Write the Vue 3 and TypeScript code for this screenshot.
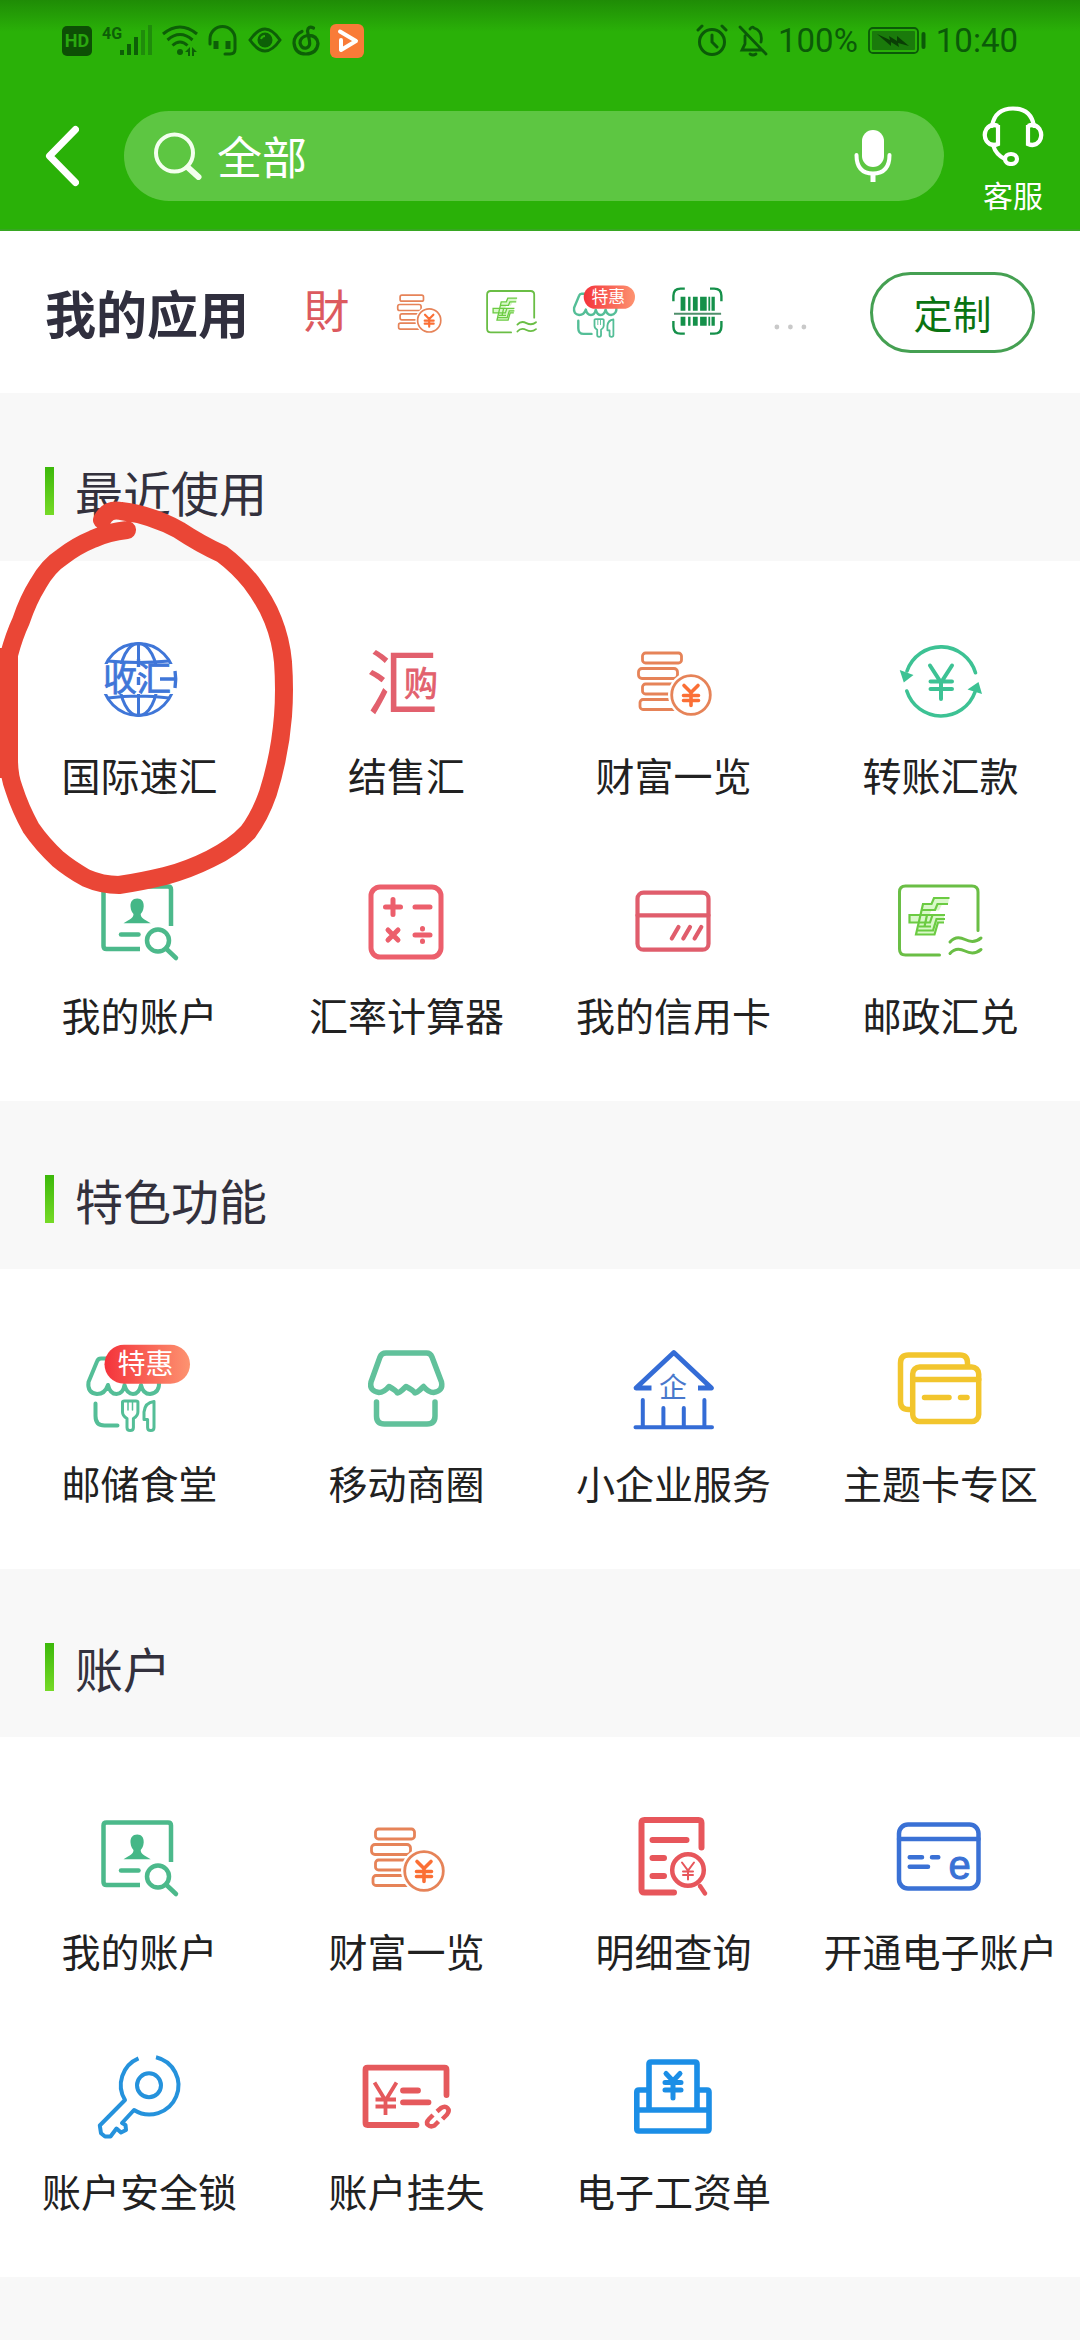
<script setup lang="ts">
import { ref } from 'vue'

interface Entry {
  label: string
  icon: string
}

interface Section {
  title: string
  marked?: boolean
  entries: Entry[]
}

const query = ref('全部')

// Every glyph is drawn on a 120 × 120 canvas.
const icons: Record<string, string> = {
  globe: `
    <g fill="none" stroke="#3f76d8" stroke-width="3">
      <circle cx="58.5" cy="58.5" r="36" />
      <ellipse cx="58.5" cy="58.5" rx="19" ry="36" />
      <path d="M58.5 22V95M28 40q30 3 61 0M28 77q30 -4 61 0" />
    </g>
    <path fill="#fff" d="M18 43H100V73H18Z" />
    <path fill="none" stroke="#3f76d8" stroke-width="3.4" d="M95 50q1.500 8 0 17M80 58h14M58.500 38v8M58.500 56v8" />
    <text x="57" y="70" font-size="34" text-anchor="middle" fill="#3f76d8" stroke="#3f76d8" stroke-width="0.8">收汇</text>`,
  exchange: `
    <text x="55" y="88" font-size="72" text-anchor="middle" fill="#e2606d">汇</text>
    <path fill="#fff" d="M56 45H94V80H56Z" />
    <text x="74" y="75" font-size="34" text-anchor="middle" fill="#e2606d" stroke="#e2606d" stroke-width="0.8">购</text>`,
  coins: `
    <g fill="none" stroke="#e68358" stroke-width="2.8">
      <rect x="28.5" y="32" width="39" height="10" rx="3" />
      <rect x="24.5" y="47.5" width="39" height="10" rx="3.5" />
      <rect x="28.5" y="63" width="39" height="10" rx="3" />
      <rect x="26" y="78.5" width="39" height="10" rx="3" />
    </g>
    <circle cx="77" cy="74" r="23" fill="#fff" />
    <circle cx="77" cy="74" r="19.3" fill="none" stroke="#e68358" stroke-width="2.8" />
    <path fill="none" stroke="#fb6f35" stroke-width="3.6" stroke-linecap="round" d="M70 64.5l7 7l7-7M77 72v12.500M69.500 74.500h15M69.500 79.500h15" />`,
  transfer: `
    <g fill="none" stroke="#3dc294" stroke-width="3.6" stroke-linecap="round">
      <path d="M26 50A36 36 0 0 1 94.500 51.700M25.800 70A36 36 0 0 0 94 71" />
      <path stroke-width="4" d="M49 44.500l11 17l11-17M60 61v17M49.500 60.500h21.500M49.500 68h21.500" />
    </g>
    <path fill="#3dc294" d="M18.700 49L32.500 54L22.800 61.500ZM97.500 61L86.500 68.500L101 73Z" />`,
  account: `
    <g fill="none" stroke="#4cb98b" stroke-width="4.500">
      <path d="M60 88H26.500q-3 0-3-3V28.500q0-3 3-3H88q3 0 3 3V65" />
      <path d="M41 73.500H58.500" stroke-linecap="round" />
      <circle cx="78" cy="79.500" r="11" />
      <path d="M86 87.500L96 97" stroke-linecap="round" />
    </g>
    <path fill="#45b787" d="M57.200 37.500c4.500 0 6.800 3 6.500 8c-.3 4-1.700 6-3 7.500c0 4 3 5 10 9.300H43.500c7-4.300 10-5.300 10-9.300c-1.300-1.500-2.700-3.500-3-7.500c-.3-5 2.200-8 6.700-8Z" />`,
  calculator: `
    <g fill="none" stroke="#ec5f6c" stroke-width="5" stroke-linecap="round">
      <rect x="24" y="26" width="70" height="70" rx="9" />
      <path d="M38.500 46h15M46 38.500v15M68 46h15M41 69l10 10M51 69l-10 10M68 74h15M75.500 67.500v0.500M75.500 80v0.500" />
    </g>`,
  credit: `
    <g fill="none" stroke="#e05d6c" stroke-width="4.2" stroke-linecap="round">
      <rect x="23.500" y="31.700" width="71" height="57" rx="6" />
      <path d="M23.500 54.300H94.500M57.800 77.500l6.700-11.500M69.300 77.500l6.700-11.500M80.600 77.500l6.700-11.500" />
    </g>`,
  postal: `
    <g fill="none" stroke="#6abe45" stroke-width="3" stroke-linecap="round">
      <path d="M58.500 94H24.500q-6 0-6-6V31q0-6 6-6H91q6 0 6 6V69.500" />
      <path d="M69 81q6-7 15-2.500t16-1.500M69 92.500q6-7 15-2.500t16-1.500" />
    </g>
    <path fill="#d9f8c9" d="M68 37H53L50.500 43H42L39.500 54H28.500V61.500H37.500L35 73.500H53.500L57 61.500H63V54.500H48L50.500 49.500H58L61 43.500H67Z" />
    <g fill="none" stroke="#6bcb42" stroke-width="2.200">
      <path d="M68.500 37H53L50.500 43H42L35 73.500H53.500L57 61.500H63" />
      <path d="M67 43H56.500L54 49H41M64 54H28.500V61.500H49L51.500 54M46 54L43.500 65.500M64 58H55.500L52 69.500H36.500M38 65.500H50" />
    </g>`,
  canteen: `
    <g fill="none" stroke="#54be97" stroke-width="4" stroke-linecap="round" stroke-linejoin="round">
      <path d="M28 29.500H21q-3 0-4 3L8.500 53Q7 64 17 65Q25 65 28 56Q30 65 36.500 65Q43 65 44.500 56Q47 65 53 65Q59 65 61 56Q63 65 70 65Q80 64 79 52" />
      <path d="M15.500 74.500V87q0 9.500 9 9.500H37.500" />
      <g stroke-width="3">
        <path d="M42.500 73V83q0 4 4.500 6.500V98.500q0 3 3.200 3t3.200-3V89.500q4.500-2.500 4.500-6.500V73q0-1-2-1H44.500q-2 0-2 1Z" />
        <path d="M74 72.500V98.500q0 3-3.200 3t-3.200-3V90.500H64V83q1-9.500 10-10.500Z" />
      </g>
      <path stroke-width="1.500" d="M48 73v8M52.500 73v8" />
    </g>
    <rect x="24.500" y="15.700" width="85.500" height="39" rx="19.500" fill="url(#badge-fill)" />
    <text x="65.500" y="45" font-size="28" text-anchor="middle" fill="#fff">特惠</text>`,
  scan: `
    <path fill="none" stroke="#15904a" stroke-width="4" d="M19 42V33q0-12 12-12H38M80 21H87q12 0 12 12V42M99 75V84q0 12-12 12H80M38 96H31q-12 0-12-12V75" />
    <g fill="#15904a">
      <path d="M31 34.500h8V58h-8ZM43.500 34.500h4V58h-4ZM51.500 34.500h8V58h-8ZM63.500 34.500h11V58h-11ZM77.300 34.500h3V58h-3ZM82.500 34.500h5.500V58h-5.500Z" />
      <path d="M31 68h8V83h-8ZM43.500 68h4V83h-4ZM51.500 68h8V83h-8ZM63.500 68h11V83h-11ZM77.300 68h3V83h-3ZM82.500 68h5.500V83h-5.500Z" />
    </g>
    <path stroke="#4f8f6b" stroke-width="3.500" d="M20 63H98.500" />`,
  wealth: `
    <text x="61" y="86" font-size="76" text-anchor="middle" fill="#dc5a5f" font-family="Noto Sans CJK TC, sans-serif">財</text>`,
  more: `
    <g fill="#c9c9c9">
      <circle cx="36.500" cy="85" r="4" />
      <circle cx="59" cy="85" r="4" />
      <circle cx="81.500" cy="85" r="4" />
    </g>`,
  store: `
    <g fill="none" stroke="#61c19b" stroke-width="5.500" stroke-linecap="round" stroke-linejoin="round">
      <path d="M39 24H79.500q4 0 5.500 4L94.500 53q2 9-8 10.500q-5 0-10-6q-8 8-9 6t-8.500-6q-8 8-9 6t-8-6q-5 6-10 6q-10-1.500-8-10.500L33 28q1.500-4 6-4Z" />
      <path d="M29.500 73V87q0 8 8 8H80q8 0 8-8V73" />
    </g>`,
  business: `
    <g fill="none" stroke="#346cd6" stroke-linecap="round" stroke-linejoin="round">
      <path stroke-width="4.800" stroke-linecap="butt" d="M37.500 59H22L59.800 23.500L97.500 59H84" />
      <path stroke-width="4" d="M28.800 71V97M49.400 79V97M69.800 79V97M90.400 71V97M21.500 98.200H98" />
    </g>
    <text x="59" y="69" font-size="28" text-anchor="middle" fill="#4878cc">企</text>`,
  cards: `
    <g fill="none" stroke="#f2c52d" stroke-width="5.500" stroke-linecap="round">
      <path d="M29 80.500H27.500q-8 0-8-8V34q0-8 8-8H79q7.500 0 7.500 8V36" />
      <rect x="31.700" y="38" width="66" height="54.500" rx="7" />
      <path d="M31.700 50.500H97.700M43.500 68.500H68M79.500 68.500H86" />
    </g>`,
  detail: `
    <g fill="none" stroke="#e7565b" stroke-width="6" stroke-linecap="round">
      <path d="M60 95.500H30.500q-3 0-3-3V26q0-3 3-3H84.500q3 0 3 3V50.500M38.500 43H72.500M38.500 61H50M38.500 79H50" />
      <circle cx="74" cy="73" r="15.800" stroke-width="4.500" />
      <path stroke-width="4.500" d="M86 89L91 96.500" />
      <path stroke-width="2" d="M68 65.500l6 8l6-8M74 73v9.500M69 74.500h10M69 78h10" />
    </g>`,
  ecard: `
    <g fill="none" stroke="#3a71d5" stroke-width="4.500" stroke-linecap="round">
      <rect x="18" y="27.500" width="79.500" height="64" rx="9" />
      <path d="M18 42H97.500M28.700 60.300H41M51 60.300H57.300M28.700 69.700H47" />
    </g>
    <text x="78.500" y="81.500" font-size="40" text-anchor="middle" fill="#3a71d5" stroke="#3a71d5" stroke-width="1" font-family="Liberation Sans, sans-serif">e</text>`,
  key: `
    <g fill="none" stroke="#2592dc" stroke-width="4" stroke-linejoin="round">
      <circle cx="69" cy="48.300" r="12" />
      <path d="M58.500 21.300A29 29 0 0 0 45 63L19.800 88.500L21 96.300L25 99.500H30.500L36.500 91.500L41 95.500L46 93L45.500 88L42 86L54 73A29 29 0 1 0 76 20.200" />
    </g>`,
  loss: `
    <g fill="none" stroke="#e5595c" stroke-width="5.800" stroke-linecap="round" stroke-linejoin="round">
      <path d="M69.500 88H20.500q-2 0-2-2V32.700q0-2 2-2H97.500q2 0 2 2V58M56 53.500H71M56 65.300H81.500" />
      <path stroke-width="3.800" stroke-linecap="butt" d="M27.500 45.500l11 18l11-18M38.500 62V78M28.500 62.500h20.500M28.500 69.500h20.500" />
      <path stroke-width="4.500" stroke-linecap="butt" d="M90 74.500l4-3.500q4-2.500 6.500 0t-.5 6.500L95.500 82M86 78l-4 4q-3.500 3.500-1 6t6.500.5l4-4" />
    </g>`,
  payroll: `
    <g fill="none" stroke="#1b8ee6" stroke-width="5.600" stroke-linejoin="round">
      <path d="M35 73V27q0-2 2-2H81q2 0 2 2V73M35 53H25q-2.200 0-2.200 2V92q0 2 2 2H93q2 0 2-2V55q0-2-2-2H83M22.800 73H95" />
      <path stroke-linecap="round" stroke-width="5" d="M52 36.500l7 7.500l7-7.500M59 45V61M51 45.500h16M51 53h16" />
    </g>`,
}

const pinned: string[] = ['wealth', 'coins', 'postal', 'canteen', 'scan', 'more']

const sections: Section[] = [
  {
    title: '最近使用',
    marked: true,
    entries: [
      { label: '国际速汇', icon: 'globe' },
      { label: '结售汇', icon: 'exchange' },
      { label: '财富一览', icon: 'coins' },
      { label: '转账汇款', icon: 'transfer' },
      { label: '我的账户', icon: 'account' },
      { label: '汇率计算器', icon: 'calculator' },
      { label: '我的信用卡', icon: 'credit' },
      { label: '邮政汇兑', icon: 'postal' },
    ],
  },
  {
    title: '特色功能',
    entries: [
      { label: '邮储食堂', icon: 'canteen' },
      { label: '移动商圈', icon: 'store' },
      { label: '小企业服务', icon: 'business' },
      { label: '主题卡专区', icon: 'cards' },
    ],
  },
  {
    title: '账户',
    entries: [
      { label: '我的账户', icon: 'account' },
      { label: '财富一览', icon: 'coins' },
      { label: '明细查询', icon: 'detail' },
      { label: '开通电子账户', icon: 'ecard' },
      { label: '账户安全锁', icon: 'key' },
      { label: '账户挂失', icon: 'loss' },
      { label: '电子工资单', icon: 'payroll' },
    ],
  },
]
</script>

<template>
  <div class="page">
    <svg class="defs" aria-hidden="true">
      <defs>
        <linearGradient id="badge-fill" x1="0" y1="0" x2="1" y2="0">
          <stop offset="0" stop-color="#f4333b" />
          <stop offset="1" stop-color="#fd9370" />
        </linearGradient>
      </defs>
    </svg>

    <header class="top">
      <div class="status">
        <div class="status-left">
          <svg width="30" height="34" viewBox="0 0 30 34" aria-hidden="true">
            <rect x="0" y="2" width="30" height="30" rx="5" fill="#0d4f05" />
            <text x="15" y="23" font-size="18" text-anchor="middle" fill="#2aa80f" class="latin">HD</text>
          </svg>
          <svg width="50" height="34" viewBox="0 0 50 34" aria-hidden="true">
            <text x="10" y="15" font-size="16" text-anchor="middle" fill="#0d5f07" class="latin">4G</text>
            <path fill="#0d5f07" d="M18 26h4v5h-4ZM25 20h4v11h-4ZM32 13h4v18h-4Z" />
            <path fill="#1f8c0b" d="M39 6h4v25h-4ZM46 1h4v30h-4Z" />
          </svg>
          <svg width="36" height="34" viewBox="0 0 36 34" aria-hidden="true">
            <g fill="none" stroke="#0d5f07" stroke-width="3">
              <path d="M1 10Q18-4 35 10M5.500 16Q18 5 30.500 16M10.500 21.500Q18 14.500 25.500 21.500" />
            </g>
            <circle cx="18" cy="28" r="3" fill="#0d5f07" />
            <path fill="#0d5f07" d="M28 23v9h-2v-4h-3ZM30 32v-9l5 5h-3v4Z" />
          </svg>
          <svg width="30" height="34" viewBox="0 0 30 34" aria-hidden="true">
            <g fill="none" stroke="#0d5f07" stroke-width="3" stroke-linecap="round">
              <path d="M2 20V15A12.500 12.500 0 0 1 27 15V25Q27 30 22 30H17" />
              <path stroke-width="5" stroke-linecap="butt" d="M8 17V25M20 17V25" />
            </g>
          </svg>
          <svg width="34" height="34" viewBox="0 0 34 34" aria-hidden="true">
            <path fill="none" stroke="#0d5f07" stroke-width="3" d="M2 16Q17-6 32 16Q17 38 2 16Z" />
            <circle cx="17" cy="16" r="7.500" fill="#0d5f07" />
            <path fill="none" stroke="#2ab108" stroke-width="2" d="M13 15q1-3 4-3" />
          </svg>
          <svg width="28" height="34" viewBox="0 0 28 34" aria-hidden="true">
            <path fill="none" stroke="#0d5f07" stroke-width="3.2" stroke-linecap="round" d="M10 7.500Q2 11 2 19Q3 30 14 30Q25 29.500 26 19.500Q25 11 15.500 11.500Q8 13 8 19Q9.500 25 14.500 24Q18.500 22.500 17.500 17L15.500 7Q16 1.500 21.500 4" />
          </svg>
          <svg width="34" height="34" viewBox="0 0 34 34" aria-hidden="true">
            <rect width="34" height="34" rx="6" fill="#f97b38" />
            <path fill="none" stroke="#fff" stroke-width="4" stroke-linecap="round" stroke-linejoin="round" d="M10 7.500L26 17L11 26V16" />
          </svg>
        </div>
        <div class="status-right">
          <svg width="32" height="34" viewBox="0 0 32 34" aria-hidden="true">
            <g fill="none" stroke="#0b5a08" stroke-width="3" stroke-linecap="round">
              <circle cx="16" cy="18" r="12.500" />
              <path d="M16 11v7l5 5M2 6l4-4M30 6l-4-4" />
            </g>
          </svg>
          <svg width="30" height="34" viewBox="0 0 30 34" aria-hidden="true">
            <g fill="none" stroke="#0b5a08" stroke-width="2.800" stroke-linecap="round">
              <path d="M2 3L28 30M7 12V20L4 26H23M12 5Q14 2 16 4Q25 7 23 18M12 30Q15 32 18 30" />
            </g>
          </svg>
          <span>100%</span>
          <svg width="58" height="34" viewBox="0 0 58 34" aria-hidden="true">
            <rect x="1" y="4" width="49" height="25" rx="4" fill="none" stroke="#0b5a08" stroke-width="1.800" />
            <rect x="4" y="7" width="43" height="19" rx="1" fill="#1a7a0b" />
            <path fill="#0a3f05" d="M9 10l13 6l-1-4l8 5v-5l12 10l-11-3l1 4l-8-5v4Z" />
            <path stroke="#0b5a08" stroke-width="4" stroke-linecap="round" d="M55.500 10V23" />
          </svg>
          <span>10:40</span>
        </div>
      </div>

      <div class="nav">
        <button type="button" class="back" aria-label="返回">
          <svg width="34" height="62" viewBox="0 0 34 62" aria-hidden="true">
            <path fill="none" stroke="#fff" stroke-width="7" stroke-linecap="round" stroke-linejoin="round" d="M30.500 4.500L4.500 31L30.500 57.500" />
          </svg>
        </button>
        <label class="search">
          <svg width="48" height="48" viewBox="0 0 48 48" aria-hidden="true">
            <circle cx="20.500" cy="21" r="18.500" fill="none" stroke="#f3ffee" stroke-width="4" />
            <path stroke="#f3ffee" stroke-width="6" stroke-linecap="round" d="M34 35.500L44.500 45" />
          </svg>
          <input v-model="query" type="text" aria-label="搜索" />
          <svg width="38" height="52" viewBox="0 0 38 52" aria-hidden="true">
            <rect x="8" y="0" width="22" height="37" rx="11" fill="#fff" />
            <path fill="none" stroke="#fff" stroke-width="4" stroke-linecap="round" d="M2.500 25Q2.500 43.500 19 43.500T35.500 25" />
            <path stroke="#fff" stroke-width="5" d="M19 43V52" />
          </svg>
        </label>
        <a href="#service" class="service">
          <svg width="62" height="60" viewBox="0 0 62 60" aria-hidden="true">
            <g fill="none" stroke="#fff" stroke-width="4.200" stroke-linecap="round">
              <path d="M10 20Q13 2.500 31 2.500T52 20" />
              <path d="M16 19V38Q9 41 4.500 35Q1 29 4.500 23Q9 17 16 20ZM46 19V38Q53 41 57.500 35Q61 29 57.500 23Q53 17 46 20Z" />
              <path d="M11 39Q14 49 23 53" />
              <ellipse cx="29" cy="53" rx="6" ry="5" />
            </g>
          </svg>
          <span>客服</span>
        </a>
      </div>
    </header>

    <main>
      <div class="mine">
        <h1>我的应用</h1>
        <div class="pinned">
          <svg
            v-for="name in pinned"
            :key="name"
            class="mini"
            viewBox="0 0 120 120"
            aria-hidden="true"
            v-html="icons[name]"
          />
        </div>
        <button type="button" class="customize">定制</button>
      </div>

      <section v-for="section in sections" :key="section.title">
        <h2>{{ section.title }}</h2>
        <ul>
          <li v-for="entry in section.entries" :key="entry.label">
            <a href="#app">
              <svg class="icon" viewBox="0 0 120 120" aria-hidden="true" v-html="icons[entry.icon]" />
              <span>{{ entry.label }}</span>
            </a>
          </li>
        </ul>
        <svg v-if="section.marked" class="mark" width="320" height="520" viewBox="0 393 320 520" aria-hidden="true">
          <path
            fill="none"
            stroke="#ea4636"
            stroke-width="18"
            stroke-linecap="round"
            stroke-linejoin="round"
            d="M102 520Q108 508 121 511Q152 515 179 530Q200 544 222 554Q238 566 251 582Q266 602 273 620Q281 640 283 662Q285 690 283 716Q280 755 268 793Q260 816 248 832Q233 848 210 859Q188 870 165 876Q140 882 119 885Q102 885 86 878Q70 869 58 859Q42 844 31 828Q20 808 14 789Q9 776 9 760V655Q14 636 21 621Q28 600 38 584Q48 566 62 557Q76 546 93 539Q108 532 127 530"
          />
          <path fill="none" stroke="#ea4636" stroke-width="10" d="M5 648V778" />
        </svg>
      </section>
    </main>
  </div>
</template>

<style>
body {
  margin: 0;
  background: #f8f8f8;
}
</style>

<style scoped>
.page {
  min-height: 100vh;
  background: #f8f8f8;
  font-family: 'Noto Sans CJK SC', 'Noto Sans', sans-serif;
  color: #212121;
}

.defs {
  position: absolute;
  width: 0;
  height: 0;
}

.latin {
  font-family: Roboto, sans-serif;
  font-weight: 700;
}

svg {
  display: block;
  flex: none;
}

button {
  padding: 0;
  background: none;
  font: inherit;
}

a {
  color: inherit;
  text-decoration: none;
}

.top {
  background: linear-gradient(#1f8c06, #2ab108 32px);
  border-bottom: 2px solid #37a722;
}

.status {
  display: flex;
  justify-content: space-between;
  align-items: center;
  height: 82px;
  padding: 0 62px;
}

.status-left {
  display: flex;
  gap: 10px;
}

.status-right {
  display: flex;
  align-items: center;
  gap: 10px;
  font-family: Roboto, sans-serif;
  font-size: 33px;
  line-height: 40px;
  color: #0b5a08;
}

.nav {
  display: flex;
  align-items: center;
  gap: 38px;
  height: 147px;
  padding: 0 36px 0 45px;
  color: #fff;
}

.back {
  margin-right: 7px;
  border: 0;
}

.search {
  display: flex;
  align-items: center;
  flex: 1;
  min-width: 0;
  height: 90px;
  box-sizing: border-box;
  padding: 0 52px 0 30px;
  border-radius: 45px;
  background: #5dc642;
}

.search input {
  flex: 1;
  min-width: 0;
  height: 66px;
  margin: 0;
  padding: 0 15px;
  border: 0;
  background: none;
  outline: none;
  color: #fff;
  font: inherit;
  font-size: 45px;
}

.service {
  display: flex;
  flex-direction: column;
  align-items: center;
  gap: 6px;
  padding-top: 10px;
  font-size: 30px;
  line-height: 44px;
}

.mine {
  display: flex;
  align-items: center;
  height: 162px;
  padding: 0 45px;
  background: #fff;
}

h1 {
  margin: 0;
  font-size: 51px;
  line-height: 72px;
  font-weight: 700;
  color: #302f3e;
}

.pinned {
  display: flex;
  gap: 21px;
  margin-left: 41px;
}

.mini {
  width: 72px;
  height: 72px;
}

.customize {
  width: 165px;
  height: 81px;
  margin-left: auto;
  border: 3px solid #45a052;
  border-radius: 41px;
  color: #0a7312;
  font-size: 39px;
}

section {
  position: relative;
}

h2 {
  display: flex;
  align-items: center;
  gap: 21px;
  height: 168px;
  box-sizing: border-box;
  margin: 0;
  padding: 28px 45px 0;
  font-size: 48px;
  font-weight: 400;
  line-height: 72px;
  color: #33313d;
}

h2::before {
  content: '';
  width: 9px;
  height: 48px;
  background: linear-gradient(#3cb80a, #76da27);
}

ul {
  display: grid;
  grid-template-columns: repeat(4, 1fr);
  margin: 0;
  padding: 30px 6px;
  background: #fff;
  list-style: none;
}

li a {
  display: flex;
  flex-direction: column;
  align-items: center;
  gap: 6px;
  padding: 30px 0;
  font-size: 39px;
  line-height: 54px;
  white-space: nowrap;
}

.icon {
  width: 120px;
  height: 120px;
}

.mark {
  position: absolute;
  top: 0;
  left: 0;
  pointer-events: none;
}
</style>
